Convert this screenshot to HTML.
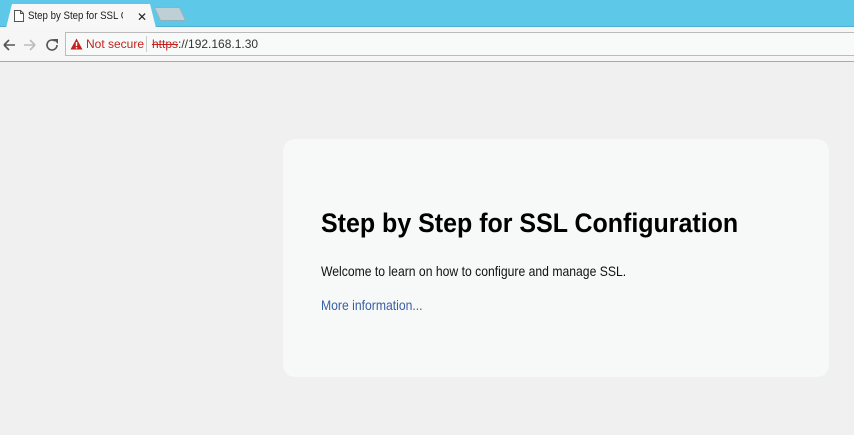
<!DOCTYPE html>
<html><head><meta charset="utf-8"><style>
*{margin:0;padding:0;box-sizing:border-box}
body{width:854px;height:435px;overflow:hidden;background:#f0f0f0;font-family:"Liberation Sans",Arial,sans-serif;position:relative}
.tabbar{position:absolute;left:0;top:0;width:854px;height:27px;background:#5ec8e8;border-bottom:1px solid #4fb0cf}
.tab{position:absolute;left:6px;top:4px;width:150px;height:24px;background:#f7f7f7;clip-path:polygon(0 100%,6px 0,144px 0,150px 100%)}
.tab span{position:absolute;left:22px;top:6px;font-size:11px;color:#222;white-space:nowrap;width:108px;overflow:hidden}
.newtab{position:absolute;left:157px;top:7px;width:26px;height:14px;background:#bfcfd6;border:1px solid #8fb0bf;transform:skewX(25deg)}
.toolbar{position:absolute;left:0;top:27px;width:854px;height:35px;background:#f6f6f6;border-bottom:1px solid #aaa}
.addr{position:absolute;left:65px;top:5px;width:800px;height:24px;background:#f7faf8;border:1px solid #bbb}
.card{position:absolute;left:283px;top:139px;width:546px;height:238px;background:#f6f9f7;border-radius:12px}
h1{position:absolute;left:321px;top:208px;font-size:27px;font-weight:bold;color:#000;white-space:nowrap;transform-origin:left top;transform:scaleX(0.925)}
.p{position:absolute;left:321px;top:263px;font-size:14px;color:#111;white-space:nowrap;transform-origin:left top;transform:scaleX(0.87)}
.a{position:absolute;left:321px;top:297px;font-size:14px;color:#3a5ea5;white-space:nowrap;transform-origin:left top;transform:scaleX(0.87)}
</style></head><body>
<div class="tabbar">
<div class="tab">
<svg style="position:absolute;left:8px;top:6px" width="10" height="12"><path d="M0.5 0.5h6l3 3v8h-9z M6.5 0.5v3h3" fill="#fff" stroke="#555"/></svg>
<span><span style="position:static;display:inline-block;transform:scaleX(0.88);transform-origin:left top">Step by Step for SSL Configuration</span></span>
<span style="left:131px;width:10px;font-size:12px">✕</span>
</div>
<div class="newtab"></div>
</div>
<div class="toolbar">
<svg style="position:absolute;left:2px;top:10px" width="60" height="16"><path d="M2 8h11M2 8l5-5M2 8l5 5" stroke="#555" stroke-width="1.6" fill="none"/><path d="M22 8h11M33 8l-5-5M33 8l-5 5" stroke="#bbb" stroke-width="1.6" fill="none"/><path d="M53 4a5 5 0 1 0 2 4" stroke="#555" stroke-width="1.6" fill="none"/><path d="M51 2l5 0 0 5z" fill="#555"/></svg>
<div class="addr">
<svg style="position:absolute;left:4px;top:5px" width="13" height="12"><path d="M6.5 0.5L12.5 11.5H0.5z" fill="#c5221f"/><path d="M6.5 4v4M6.5 9v1.5" stroke="#fff" stroke-width="1.4"/></svg>
<span style="position:absolute;left:20px;top:4px;font-size:12px;color:#c5221f">Not secure</span>
<span style="position:absolute;left:80px;top:3px;width:1px;height:16px;background:#ccc"></span>
<span style="position:absolute;left:86px;top:4px;font-size:12px;color:#333"><span style="color:#c5221f;text-decoration:line-through">https</span>://192.168.1.30</span>
</div>
</div>
<div class="card"></div>
<h1>Step by Step for SSL Configuration</h1>
<div class="p">Welcome to learn on how to configure and manage SSL.</div>
<div class="a">More information...</div>
</body></html>
